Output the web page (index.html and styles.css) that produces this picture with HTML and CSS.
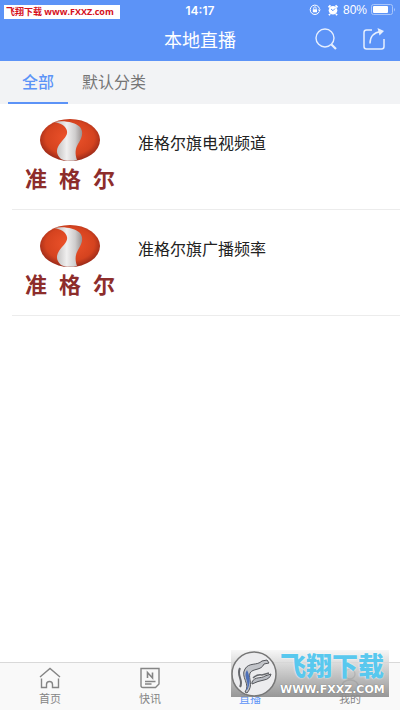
FILE: index.html
```html
<!DOCTYPE html>
<html lang="zh-CN">
<head>
    <meta charset="UTF-8">
    <meta name="viewport" content="width=device-width, initial-scale=1.0">
    <title>本地直播</title>
    <link rel="stylesheet" href="styles.css">
</head>
<body>

    <!-- logo shapes shared by the channel rows -->
    <svg class="defs" width="0" height="0" aria-hidden="true">
        <defs>
            <radialGradient id="ball" cx="50%" cy="45%" r="58%">
                <stop offset="0" stop-color="#f0542c"/>
                <stop offset="0.7" stop-color="#d5431f"/>
                <stop offset="1" stop-color="#8c2418"/>
            </radialGradient>
            <linearGradient id="silver" x1="0" y1="0" x2="1" y2="0">
                <stop offset="0" stop-color="#b5b3b3"/>
                <stop offset="0.45" stop-color="#f0efef"/>
                <stop offset="0.75" stop-color="#cfcdcd"/>
                <stop offset="1" stop-color="#98908f"/>
            </linearGradient>
            <symbol id="emblem" viewBox="0 0 62 44">
                <ellipse cx="31" cy="22" rx="30" ry="21" fill="url(#ball)"/>
                <path d="M15 4C24 2 36 4 41 9C45 14 43 20 39 26C36 31 36 36 38 42C32 43.500 26 43 22 41C17 36 17 32 20 27C24 21 29 18 28 13C27 8 22 5 15 4Z" fill="url(#silver)"/>
            </symbol>
        </defs>
    </svg>

    <header class="top">
        <div class="status">
            <span class="site">飞翔下载 www.FXXZ.com</span>
            <span class="clock">14:17</span>
            <div class="battery">
                <svg width="12" height="12" viewBox="0 0 12 12" fill="none" stroke="#fff">
                    <path d="M10.300 7.500A4.700 4.700 0 1 1 10.500 4.800"/>
                    <path d="M8.800 5.500h3l-1.500 2z" fill="#fff" stroke="none"/>
                    <rect x="3.800" y="5.300" width="4.200" height="3" fill="#fff" stroke="none"/>
                    <path d="M4.700 5.300V4a1.200 1.200 0 0 1 2.400 0v1.300" stroke-width="0.800"/>
                </svg>
                <svg class="alarm" width="12" height="12" viewBox="0 0 12 12">
                    <circle cx="6" cy="6.300" r="4.300" fill="#fff"/>
                    <path d="M1.500 3.300 3.500 1.300M10.500 3.300 8.500 1.300M3 10l-1 1.300M9 10l1 1.300" stroke="#fff" stroke-width="1.800"/>
                    <path d="M4 5l2 1.700L8 4.500" fill="none" stroke="#5c93f7"/>
                </svg>
                <span>80%</span>
                <svg width="25" height="12" viewBox="0 0 25 12">
                    <rect x="0.500" y="0.500" width="21" height="10" rx="2" fill="none" stroke="#a9c6fb"/>
                    <rect x="2" y="2" width="15" height="7" rx="1" fill="#fff"/>
                    <path d="M23 4q2 1.500 0 3.500z" fill="#a9c6fb"/>
                </svg>
            </div>
        </div>
        <div class="bar">
            <h1>本地直播</h1>
            <div class="actions">
                <button aria-label="搜索">
                    <svg width="24" height="24" viewBox="0 0 24 24" fill="none" stroke="#e6effe">
                        <circle cx="11" cy="11" r="9" stroke-width="1.400"/>
                        <path d="M17.500 17.500 22 22" stroke-width="2.200"/>
                    </svg>
                </button>
                <button aria-label="分享">
                    <svg width="24" height="24" viewBox="0 0 24 24" fill="none" stroke="#e6effe" stroke-width="1.500">
                        <path d="M10 3H4.500Q2 3 2 5.500V19.500Q2 22 4.500 22H19.500Q22 22 22 19.500V12"/>
                        <path d="M8 16.500C8 9.500 11 5.500 19 4.500"/>
                        <path d="M15.500 1 22 4 17.500 8.500Z" fill="#e6effe" stroke="none"/>
                    </svg>
                </button>
            </div>
        </div>
    </header>

    <nav class="tabs">
        <a class="tab active" href="#all">全部</a>
        <a class="tab" href="#default">默认分类</a>
    </nav>

    <main class="list">
        <a class="channel" href="#tv">
            <div class="logo">
                <svg width="62" height="44"><use href="#emblem"/></svg>
                <div class="word"><span>准</span><span>格</span><span>尔</span></div>
            </div>
            <span class="name">准格尔旗电视频道</span>
        </a>
        <a class="channel" href="#radio">
            <div class="logo">
                <svg width="62" height="44"><use href="#emblem"/></svg>
                <div class="word"><span>准</span><span>格</span><span>尔</span></div>
            </div>
            <span class="name">准格尔旗广播频率</span>
        </a>
    </main>

    <footer class="bottom">
        <a class="item" href="#home">
            <svg width="22" height="22" viewBox="0 0 22 22" fill="none" stroke="#858585" stroke-width="1.400">
                <path d="M1 10 11 1.500 21 10"/>
                <path d="M2.500 11.500V20.500H7.500V17.500Q7.500 14.500 10.500 14.500T13.500 17.500V20.500H19.500V11.500"/>
            </svg>
            首页
        </a>
        <a class="item" href="#news">
            <svg width="22" height="22" viewBox="0 0 22 22" fill="none" stroke="#858585" stroke-width="1.400">
                <path d="M2 1.500H20V17L16.500 20.500H4Q2 20.500 2 18.500Z"/>
                <path d="M8.500 11V5.500L13.500 11V5.500" stroke-width="1.600"/>
                <path d="M6 14.500H16.500M6 17H12.500"/>
            </svg>
            快讯
        </a>
        <a class="item on" href="#live">
            <svg width="22" height="22" viewBox="0 0 22 22" fill="none" stroke="#5c93f7" stroke-width="1.400">
                <rect x="2" y="4" width="18" height="14" rx="2"/>
                <path d="M9 8v6l5-3z"/>
            </svg>
            直播
        </a>
        <a class="item" href="#me">
            <svg width="22" height="22" viewBox="0 0 22 22" fill="none" stroke="#858585" stroke-width="1.400">
                <circle cx="11" cy="7" r="5"/>
                <path d="M2 21Q3 13 11 13T20 21"/>
            </svg>
            我的
        </a>
        <div class="stamp">
            <svg class="seal" width="46" height="46" viewBox="0 0 46 46">
                <circle cx="23" cy="23" r="22" fill="#ececee" stroke="#777" stroke-width="1.500"/>
                <path d="M14 41C20 33 9 26 14 18C18 11 26 15 31 10L36 9L38 12L33 13C30 20 22 17 19 22C17 28 23 34 16 42Z" fill="#c2c4c9" stroke="#55575c"/>
                <path d="M15 39C20 32 11 26 16 19C19 25 20 33 16 39Z" fill="#4e70b8"/>
                <path d="M9 36C13 29 5 25 9 17" fill="none" stroke="#66686d" stroke-width="2"/>
                <path d="M21 31C24 25 30 28 34 25L40 23Q39 28 33 29Q27 30 21 33Z" fill="#b9bcc3" stroke="#55575c"/>
                <path d="M22 27Q26 23 31 24L38 22" fill="none" stroke="#66686d" stroke-width="1.500"/>
            </svg>
            <div class="stamp-text">
                <strong>飞翔下载</strong>
                <span>WWW.FXXZ.COM</span>
            </div>
        </div>
    </footer>

</body>
</html>
```

FILE: styles.css
```css
body{
    margin: 0;
    min-height: 100vh;
    display: flex;
    flex-direction: column;
    background-color: #fff;
    font-family: "Liberation Sans", "Noto Sans CJK SC", sans-serif;
}

a{
    color: inherit;
    text-decoration: none;
}

svg{
    display: block;
}

.defs{
    position: absolute;
}

.top{
    background-color: #5c93f7;
    color: #fff;
}

.status{
    display: grid;
    grid-template-columns: 1fr auto 1fr;
    align-items: center;
    height: 20px;
    padding: 0 4px;
    font-size: 12px;
}

.site{
    justify-self: start;
    height: 14px;
    margin-top: 4px;
    padding: 0 6px 0 2px;
    background-color: #fff;
    color: #d5101c;
    font-family: "Open Sans", "Noto Sans CJK SC", sans-serif;
    font-size: 9px;
    font-weight: bold;
    line-height: 14px;
    white-space: nowrap;
}

.clock{
    font-family: Inter, sans-serif;
    font-weight: 600;
}

.battery{
    display: flex;
    justify-content: flex-end;
    align-items: center;
    gap: 4px;
}

.alarm{
    margin-left: 2px;
}

.bar{
    display: grid;
    grid-template-columns: 1fr auto 1fr;
    align-items: center;
    height: 41px;
    padding: 0 14px;
}

.bar h1{
    grid-column: 2;
    margin: 0;
    font-size: 18px;
    font-weight: normal;
    line-height: 24px;
}

.actions{
    display: flex;
    justify-content: flex-end;
    gap: 24px;
    margin-bottom: 4px;
}

.actions button{
    padding: 0;
    border: none;
    background: none;
    cursor: pointer;
}

.tabs{
    display: flex;
    height: 43px;
    padding-left: 8px;
    background-color: #f2f3f5;
    color: #757575;
    font-size: 16px;
    line-height: 44px;
}

.tab{
    box-sizing: border-box;
    padding: 0 14px;
}

.tab.active{
    border-bottom: 2px solid #5c93f7;
    color: #5c93f7;
    font-weight: 500;
}

.list{
    flex: 1;
    padding-left: 12px;
}

.channel{
    display: flex;
    gap: 22px;
    height: 105px;
    padding-left: 12px;
    border-bottom: 1px solid #ececec;
}

.logo{
    display: flex;
    flex-direction: column;
    align-items: center;
    width: 92px;
    padding-top: 14px;
}

.word{
    display: flex;
    gap: 12px;
    color: #8d2d2b;
    font-size: 22px;
    font-weight: bold;
    line-height: 36px;
}

.name{
    padding-top: 28px;
    color: #222;
    font-size: 16px;
    line-height: 24px;
}

.bottom{
    position: relative;
    display: grid;
    grid-template-columns: repeat(4, 1fr);
    height: 47px;
    border-top: 1px solid #d9d9d9;
    background-color: #f9f9f9;
}

.item{
    display: flex;
    flex-direction: column;
    align-items: center;
    gap: 2px;
    padding-top: 4px;
    color: #858585;
    font-size: 11px;
    line-height: 17px;
}

.item.on{
    color: #5c93f7;
}

/* site badge laid over the bottom bar */
.stamp{
    position: absolute;
    right: 11px;
    bottom: 13px;
    display: flex;
    align-items: center;
    gap: 3px;
    width: 158px;
    height: 47px;
    background: linear-gradient(rgba(245, 245, 245, 0.8), rgba(140, 140, 140, 0.9));
}

.seal{
    flex-shrink: 0;
}

.stamp-text{
    display: flex;
    flex-direction: column;
    white-space: nowrap;
}

.stamp-text strong{
    color: #59c8ee;
    font-size: 26px;
    font-weight: 900;
    line-height: 32px;
    text-shadow: 0 0 2px #fff;
}

.stamp-text span{
    color: #fff;
    font-family: "DejaVu Sans", sans-serif;
    font-size: 11px;
    font-weight: bold;
    line-height: 13px;
    text-shadow: 0 0 1px #555;
}
```
